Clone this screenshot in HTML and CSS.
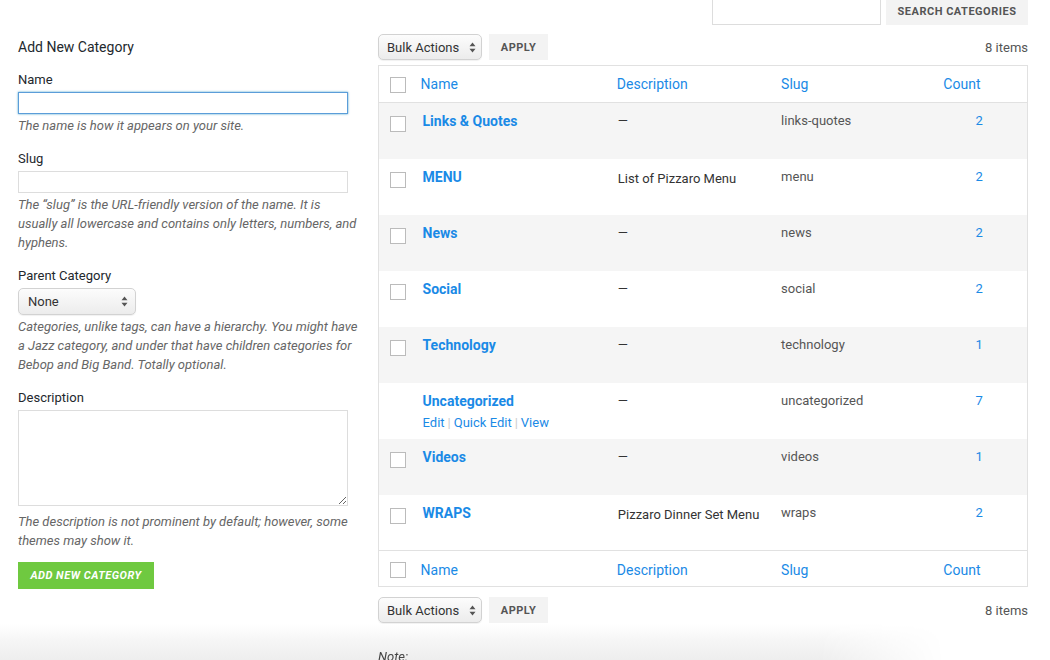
FILE: index.html
```html
<!DOCTYPE html>
<html lang="en">
<head>
<meta charset="utf-8">
<title>Categories</title>
<link rel="stylesheet" href="styles.css">
</head>
<body>
<div class="search-bar">
  <input class="search-input" type="text" aria-label="Search categories">
  <button class="btn-light search-btn" type="button">Search Categories</button>
</div>

<div class="page">
  <div class="col-left">
    <h2 class="form-title">Add New Category</h2>

    <div class="field">
      <label class="field-label">Name</label>
      <input class="text-input focused" type="text">
      <p class="hint">The name is how it appears on your site.</p>
    </div>

    <div class="field">
      <label class="field-label">Slug</label>
      <input class="text-input" type="text">
      <p class="hint">The “slug” is the URL-friendly version of the name. It is usually all lowercase and contains only letters, numbers, and hyphens.</p>
    </div>

    <div class="field">
      <label class="field-label">Parent Category</label>
      <div class="fake-select parent-select">
        <span>None</span>
        <svg class="updown" width="7" height="11" viewBox="0 0 7 11"><path d="M3.5 0.5 L6.5 4.2 H0.5 Z M3.5 10.5 L6.5 6.8 H0.5 Z" fill="#555"/></svg>
      </div>
      <p class="hint">Categories, unlike tags, can have a hierarchy. You might have a Jazz category, and under that have children categories for Bebop and Big Band. Totally optional.</p>
    </div>

    <div class="field">
      <label class="field-label">Description</label>
      <textarea class="textarea"></textarea>
      <p class="hint hint-desc">The description is not prominent by default; however, some themes may show it.</p>
    </div>

    <button class="btn-green" type="button">Add New Category</button>
  </div>

  <div class="col-right">
    <div class="tablenav">
      <div class="fake-select bulk-select">
        <span>Bulk Actions</span>
        <svg class="updown" width="7" height="11" viewBox="0 0 7 11"><path d="M3.5 0.5 L6.5 4.2 H0.5 Z M3.5 10.5 L6.5 6.8 H0.5 Z" fill="#555"/></svg>
      </div>
      <button class="btn-light apply-btn" type="button">Apply</button>
      <span class="items">8 items</span>
    </div>

    <table class="list">
      <colgroup>
        <col class="c-cb"><col class="c-name"><col class="c-desc"><col class="c-slug"><col class="c-count">
      </colgroup>
      <thead>
        <tr><th class="cb"><span class="checkbox"></span></th><th>Name</th><th>Description</th><th>Slug</th><th>Count</th></tr>
      </thead>
      <tbody>
        <tr class="alt"><td class="cb"><span class="checkbox"></span></td><td class="name"><a class="row-title">Links &amp; Quotes</a></td><td class="desc">—</td><td class="slug">links-quotes</td><td class="count">2</td></tr>
        <tr><td class="cb"><span class="checkbox"></span></td><td class="name"><a class="row-title">MENU</a></td><td class="desc desc-text">List of Pizzaro Menu</td><td class="slug">menu</td><td class="count">2</td></tr>
        <tr class="alt"><td class="cb"><span class="checkbox"></span></td><td class="name"><a class="row-title">News</a></td><td class="desc">—</td><td class="slug">news</td><td class="count">2</td></tr>
        <tr><td class="cb"><span class="checkbox"></span></td><td class="name"><a class="row-title">Social</a></td><td class="desc">—</td><td class="slug">social</td><td class="count">2</td></tr>
        <tr class="alt"><td class="cb"><span class="checkbox"></span></td><td class="name"><a class="row-title">Technology</a></td><td class="desc">—</td><td class="slug">technology</td><td class="count">1</td></tr>
        <tr><td class="cb"></td><td class="name"><a class="row-title">Uncategorized</a><div class="row-actions"><a>Edit</a><span class="sep">|</span><a>Quick Edit</a><span class="sep">|</span><a>View</a></div></td><td class="desc">—</td><td class="slug">uncategorized</td><td class="count">7</td></tr>
        <tr class="alt"><td class="cb"><span class="checkbox"></span></td><td class="name"><a class="row-title">Videos</a></td><td class="desc">—</td><td class="slug">videos</td><td class="count">1</td></tr>
        <tr><td class="cb"><span class="checkbox"></span></td><td class="name"><a class="row-title">WRAPS</a></td><td class="desc desc-text">Pizzaro Dinner Set Menu</td><td class="slug">wraps</td><td class="count">2</td></tr>
      </tbody>
      <tfoot>
        <tr><th class="cb"><span class="checkbox"></span></th><th>Name</th><th>Description</th><th>Slug</th><th>Count</th></tr>
      </tfoot>
    </table>

    <div class="tablenav tablenav-bottom">
      <div class="fake-select bulk-select">
        <span>Bulk Actions</span>
        <svg class="updown" width="7" height="11" viewBox="0 0 7 11"><path d="M3.5 0.5 L6.5 4.2 H0.5 Z M3.5 10.5 L6.5 6.8 H0.5 Z" fill="#555"/></svg>
      </div>
      <button class="btn-light apply-btn" type="button">Apply</button>
      <span class="items">8 items</span>
    </div>
  </div>
</div>

<div class="footer-band">
  <p class="note"><strong>Note:</strong></p>
</div>
</body>
</html>
```

FILE: styles.css
```css
* { box-sizing: border-box; }

html, body { margin: 0; padding: 0; }

body {
  width: 1050px;
  height: 660px;
  overflow: hidden;
  background: #fff;
  font-family: Roboto, "Liberation Sans", Arial, sans-serif;
  font-size: 13px;
  color: #444;
}

button { font-family: inherit; cursor: pointer; }

/* top search */
.search-bar {
  display: flex;
  justify-content: flex-end;
  gap: 5px;
  padding-right: 22px;
  height: 25px;
  margin-top: -2px;
  margin-bottom: 1px;
}
.search-input {
  width: 169px;
  height: 27px;
  border: 1px solid #ddd;
  background: #fff;
  margin: 0;
}
.btn-light {
  border: none;
  background: #f3f3f3;
  color: #555;
  font-weight: 700;
  font-size: 11px;
  letter-spacing: 0.5px;
  text-transform: uppercase;
  padding: 0;
}
.search-btn { width: 142px; height: 27px; padding-top: 0; }

/* columns */
.page {
  display: grid;
  grid-template-columns: 341px 650px;
  column-gap: 19px;
  padding: 10px 22px 0 18px;
}

/* left form */
.form-title {
  margin: 0;
  font-size: 14px;
  font-weight: 400;
  line-height: 20px;
  color: #23282d;
  padding-top: 3px;
}
.field { margin-top: 14px; }
.field + .field { margin-top: 15px; }
.field-label {
  display: block;
  font-size: 13px;
  line-height: 18px;
  color: #23282d;
  margin-bottom: 3px;
}
.text-input {
  display: block;
  width: 330px;
  height: 22px;
  margin: 0;
  border: 1px solid #ddd;
  background: #fff;
}
.text-input.focused {
  border-color: #5b9dd9;
  box-shadow: 0 0 2px rgba(30, 140, 190, 0.8);
}
.hint {
  margin: 2px 0 0;
  font-style: italic;
  font-size: 13px;
  line-height: 19px;
  color: #666;
}
.hint-desc { margin-top: 6px; }

.fake-select {
  display: flex;
  align-items: center;
  justify-content: space-between;
  border: 1px solid #d2d2d2;
  border-radius: 5px;
  background: linear-gradient(to bottom, #fcfcfc, #ececec);
  box-shadow: 0 1px 1px rgba(0,0,0,0.06);
  color: #333;
  font-size: 13px;
}
.parent-select {
  width: 118px;
  height: 27px;
  padding: 0 7px 0 9px;
}
.updown { flex: none; }

.textarea {
  display: block;
  width: 330px;
  height: 96px;
  margin: 0;
  border: 1px solid #ddd;
  background: #fff;
  resize: vertical;
}

.btn-green {
  margin-top: 12px;
  width: 136px;
  height: 27px;
  border: none;
  background: #6fc940;
  color: #fff;
  font-size: 11px;
  font-weight: 700;
  font-style: italic;
  letter-spacing: 0.5px;
  text-transform: uppercase;
  padding: 0;
}

/* right column */
.tablenav {
  display: flex;
  align-items: center;
  gap: 7px;
  height: 26px;
}
.bulk-select {
  width: 104px;
  height: 26px;
  padding: 0 5px 0 8px;
}
.apply-btn { width: 59px; height: 26px; }
.items { margin-left: auto; color: #555; font-size: 13px; }

.list {
  margin-top: 5px;
  width: 650px;
  border-collapse: collapse;
  table-layout: fixed;
  border: 1px solid #e1e1e1;
}
.c-cb { width: 33px; }
.c-name { width: 195px; }
.c-desc { width: 164px; }
.c-slug { width: 162px; }
.c-count { width: 94px; }

.list th {
  padding: 0 10px;
  text-align: left;
  font-weight: 400;
  font-size: 14px;
  color: #1a8ae6;
  vertical-align: middle;
}
.list thead th { border-bottom: 1px solid #e1e1e1; height: 37px; }
.list tfoot th { border-top: 1px solid #e1e1e1; height: 36px; padding-top: 2px; }
.list th.cb, .list td.cb { padding-left: 11px; padding-right: 0; }
.list th:nth-child(2) { padding-left: 9px; }

.checkbox {
  display: block;
  width: 16px;
  height: 16px;
  border: 1px solid #bbb;
  background: #fff;
}
.list thead .checkbox, .list tfoot .checkbox { margin-top: 1px; }

.list td {
  height: 56px;
  vertical-align: top;
  padding: 8px 10px 0;
  line-height: 20px;
  font-size: 13px;
}
.list td.cb { padding-top: 0; }
.list td.cb .checkbox { margin-top: 13px; }
.list tr.alt td { background: #f5f5f5; }
.row-title {
  display: inline-block;
  padding-left: 1px;
  font-weight: 700;
  font-size: 14px;
  color: #1a8ae6;
}
.list td.desc { color: #333; padding-left: 11px; padding-top: 8px; }
.list td.desc-text { padding-top: 10px; }
.list td.slug { color: #555; padding-left: 10px; }
.list td.count { color: #1a8ae6; text-align: center; padding-left: 0; padding-right: 2px; }

.row-actions {
  padding-left: 1px;
  line-height: 21px;
  font-size: 13px;
  font-weight: 400;
}
.row-actions a { color: #1a8ae6; }
.row-actions .sep { color: #ccc; margin: 0 3px; }

.tablenav-bottom { margin-top: 10px; }

/* bottom band */
.footer-band {
  margin-top: 1px;
  height: 40px;
  padding-left: 378px;
  background: linear-gradient(to bottom, #ffffff 0%, #f6f6f6 40%, #ececec 100%);
  -webkit-mask-image: linear-gradient(to right, #000 0%, #000 78%, transparent 90%);
  mask-image: linear-gradient(to right, #000 0%, #000 78%, transparent 90%);
}
.note {
  margin: 0;
  padding-top: 24px;
  font-size: 13px;
  font-style: italic;
  line-height: 18px;
  color: #444;
}
.note strong { font-weight: 400; }
```
